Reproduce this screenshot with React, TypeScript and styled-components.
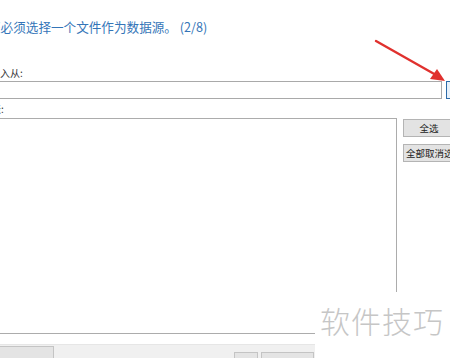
import styled, { createGlobalStyle } from "styled-components";

const GlobalStyle = createGlobalStyle`
    html, body {
        margin: 0;
        padding: 0;
        background: #ffffff;
        overflow: hidden;
    }
    body {
        font-family: "Noto Sans CJK SC", "Noto Sans", sans-serif;
    }
`;

export default function App() {
    return (
        <Page>
            <GlobalStyle />
            <Heading>您必须选择一个文件作为数据源。 (2/8)</Heading>

            <FieldLabel $cut={10} $gap={33}>导入从:</FieldLabel>
            <InputRow>
                <PathInput />
                <BrowseButton />
            </InputRow>

            <FieldLabel $cut={9} $gap={4}>表:</FieldLabel>
            <MainRow>
                <ListBox />
                <SideColumn>
                    <SideButton $center>全选</SideButton>
                    <SideButton>全部取消选择</SideButton>
                </SideColumn>
            </MainRow>

            <Footer>
                <FooterButton $width={62} $cut={10} />
                <FooterRight>
                    <FooterButton $width={22} />
                    <FooterButton $width={51} />
                </FooterRight>
            </Footer>

            <Watermark>软件技巧</Watermark>

            <Arrow viewBox="0 0 450 358" width="450" height="358">
                <line x1="376" y1="41" x2="436" y2="75" stroke="#e0312e" strokeWidth="2.4" strokeLinecap="round" />
                <polygon points="445,81 430,79 437,69" fill="#e0312e" />
            </Arrow>
        </Page>
    );
}

const Page = styled.div`
    position: relative;
    width: 450px;
    height: 358px;
    overflow: hidden;
    background: #ffffff;
    display: flex;
    flex-direction: column;
`;

const Heading = styled.div`
    margin: 20px 0 0 -12px;
    font-size: 12.6px;
    line-height: 14px;
    color: #3475b8;
    white-space: nowrap;
`;

const FieldLabel = styled.div<{ $cut: number; $gap: number }>`
    margin: ${({ $gap }) => $gap}px 0 0 -${({ $cut }) => $cut}px;
    font-size: 10px;
    line-height: 12px;
    color: #333333;
    white-space: nowrap;
`;

const InputRow = styled.div`
    display: flex;
    gap: 4px;
    margin: 2px 0 0 -4px;
    width: 470px;
`;

const PathInput = styled.div`
    width: 444px;
    height: 16px;
    border: 1px solid #a9a9a9;
    background: #ffffff;
`;

const BrowseButton = styled.div`
    width: 14px;
    height: 16px;
    border: 1px solid #2c6aa8;
    background: #e6f0fa;
`;

const MainRow = styled.div`
    display: flex;
    margin: 3px 0 0 -4px;
    width: 470px;
`;

const ListBox = styled.div`
    width: 399px;
    height: 214px;
    border: 1px solid #acacac;
    background: #ffffff;
`;

const SideColumn = styled.div`
    display: flex;
    flex-direction: column;
    gap: 7px;
    margin: 1px 0 0 6px;
`;

const SideButton = styled.div<{ $center?: boolean }>`
    width: 50px;
    height: 16px;
    border: 1px solid #b4b4b4;
    background: #e3e3e3;
    font-size: 9.5px;
    line-height: 16px;
    color: #222222;
    white-space: nowrap;
    overflow: hidden;
    text-align: ${({ $center }) => ($center ? "center" : "left")};
    padding-left: ${({ $center }) => ($center ? "0" : "2px")};
`;

const Footer = styled.div`
    display: flex;
    justify-content: space-between;
    align-items: flex-end;
    margin-top: 10px;
    border-top: 1px solid #e6e6e6;
    background: #f0f0f0;
    flex: 1;
    padding-right: 136px;
`;

const FooterRight = styled.div`
    display: flex;
    gap: 3px;
    margin-bottom: -6px;
`;

const FooterButton = styled.div<{ $width: number; $cut?: number }>`
    width: ${({ $width }) => $width}px;
    height: 12px;
    margin-left: -${({ $cut }) => $cut ?? 0}px;
    margin-bottom: -2px;
    border: 1px solid #c4c4c4;
    background: #e4e4e4;
`;

const Watermark = styled.div`
    position: absolute;
    right: 0;
    top: 292px;
    width: 130px;
    height: 66px;
    background: #ffffff;
    padding: 12px 0 0 5px;
    font-size: 30px;
    line-height: 32px;
    letter-spacing: 1px;
    color: #c6c6c6;
    font-weight: 300;
    white-space: nowrap;
`;

const Arrow = styled.svg`
    position: absolute;
    left: 0;
    top: 0;
    pointer-events: none;
`;
